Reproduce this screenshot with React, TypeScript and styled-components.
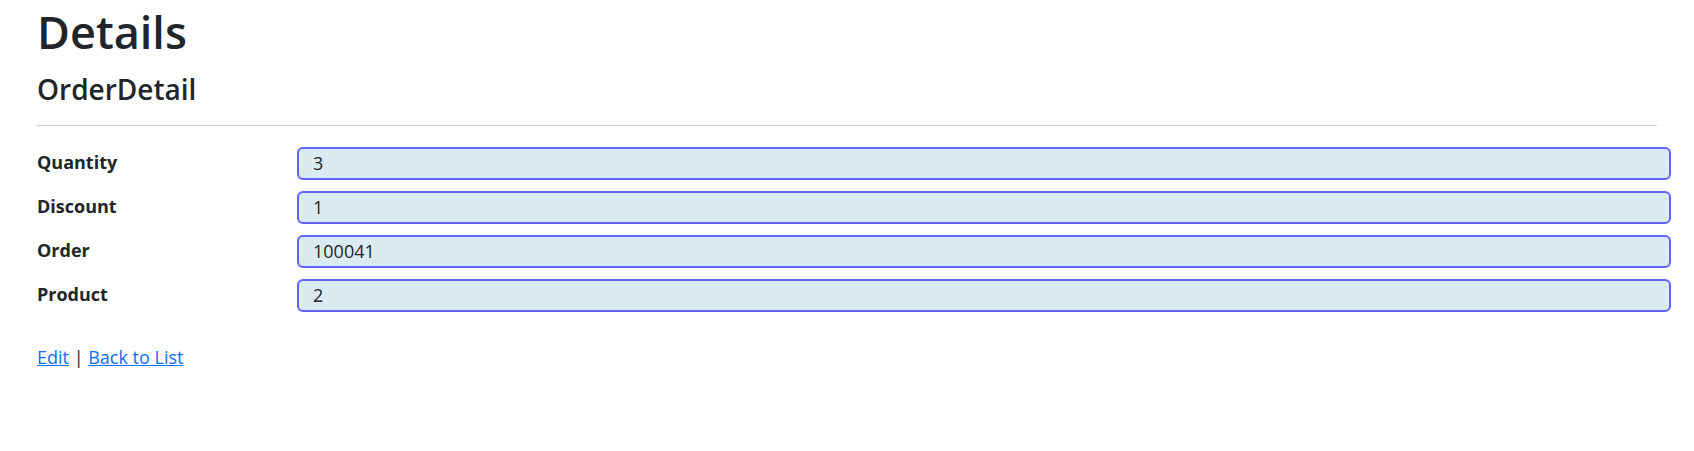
import { Fragment } from "react";
import styled, { createGlobalStyle } from "styled-components";

const GlobalStyle = createGlobalStyle`
  body {
    margin: 0;
    background: #fff;
    color: #212529;
    font-family: "Open Sans", "Noto Sans", sans-serif;
    font-size: 18px;
    line-height: 1.5;
  }
`;

const Page = styled.main`
  padding: 5px 37px 0;
`;

const Title = styled.h1`
  margin: 0;
  font-size: 45px;
  font-weight: 600;
  line-height: 54px;
`;

const SubTitle = styled.h4`
  margin: 14px 0 0;
  font-size: 28px;
  font-weight: 600;
  line-height: 32px;
`;

const Divider = styled.hr`
  margin: 20px 0 0;
  border: 0;
  border-top: 1px solid #cbcbcc;
`;

const FieldList = styled.dl`
  display: grid;
  grid-template-columns: 260px 1fr;
  row-gap: 11px;
  margin: 21px -14px 0 0;
`;

const Label = styled.dt`
  font-weight: 700;
  line-height: 31px;
`;

const Value = styled.dd`
  margin: 0;
  height: 33px;
  box-sizing: border-box;
  padding: 0 14px;
  line-height: 29px;
  border: 2px solid #6363fb;
  border-radius: 6px;
  background: #dbebf2;
`;

const Actions = styled.div`
  margin-top: 32px;
  line-height: 27px;
`;

const Link = styled.a`
  color: #0d6efd;
  text-decoration: underline;
`;

const fields = [
  { label: "Quantity", value: "3" },
  { label: "Discount", value: "1" },
  { label: "Order", value: "100041" },
  { label: "Product", value: "2" },
];

export default function App() {
  return (
    <>
      <GlobalStyle />
      <Page>
        <Title>Details</Title>
        <SubTitle>OrderDetail</SubTitle>
        <Divider />
        <FieldList>
          {fields.map((f) => (
            <Fragment key={f.label}>
              <Label>{f.label}</Label>
              <Value>{f.value}</Value>
            </Fragment>
          ))}
        </FieldList>
        <Actions>
          <Link href="#">Edit</Link> | <Link href="#">Back to List</Link>
        </Actions>
      </Page>
    </>
  );
}
